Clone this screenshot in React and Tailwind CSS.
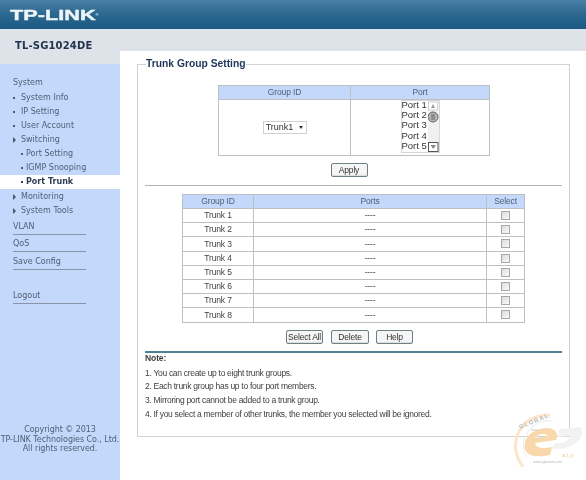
const sans = "font-['Liberation_Sans',Arial,sans-serif]";
const deja = "font-['DejaVu_Sans',Verdana,sans-serif]";

function Bullet({ type }) {
  return (
    <span className="w-[21px] pl-[13px] flex items-center shrink-0">
      {type === "arrow" ? (
        <span className="w-0 h-0 border-y-[3px] border-y-transparent border-l-[3px] border-l-[#4a5a6c]" />
      ) : (
        <span className="w-[2px] h-[2px] bg-[#4a5a6c]" />
      )}
    </span>
  );
}

function TopItem({ label, type = "dot" }) {
  return (
    <div className="h-[14px] flex items-center text-[8px] text-[#4f5f76]">
      <Bullet type={type} />
      <span>{label}</span>
    </div>
  );
}

function SubItem({ label, active }) {
  return (
    <div
      className={
        "h-[14px] flex items-center pl-[21px] text-[8px] " +
        (active ? "bg-white font-bold text-[#2f3f55]" : "text-[#4f5f76]")
      }
    >
      <span className="w-[5px] flex items-center">
        <span className={"w-[2px] h-[2px] " + (active ? "bg-[#2f3f55]" : "bg-[#4f5f76]")} />
      </span>
      <span>{label}</span>
    </div>
  );
}

function LineItem({ label, className = "" }) {
  return (
    <div className={"ml-[13px] w-[73px] h-[15px] border-b border-[#8a94a8] text-[8px] leading-[14px] text-[#4f5f76] " + className}>
      {label}
    </div>
  );
}

function Sidebar() {
  return (
    <aside className={"w-[120px] shrink-0 flex flex-col bg-[#c3d8fb] " + deja}>
      <div className="h-[35px] bg-[#dee3ea] flex items-center pl-[15px] pb-[2px] text-[10px] font-bold tracking-[0.15px] text-[#22344e]">
        TL-SG1024DE
      </div>
      <div className="pt-[11px] flex-1 flex flex-col">
        <div className="h-[15px] pl-[13px] flex items-center text-[8px] text-[#4f5f76]">System</div>
        <div className="h-[1px]" />
        <TopItem label="System Info" />
        <TopItem label="IP Setting" />
        <TopItem label="User Account" />
        <TopItem label="Switching" type="arrow" />
        <SubItem label="Port Setting" />
        <SubItem label="IGMP Snooping" />
        <SubItem label="Port Trunk" active />
        <div className="h-[1px]" />
        <TopItem label="Monitoring" type="arrow" />
        <TopItem label="System Tools" type="arrow" />
        <LineItem label="VLAN" className="mt-[2px]" />
        <LineItem label="QoS" className="mt-[2px]" />
        <LineItem label="Save Config" className="mt-[3px]" />
        <LineItem label="Logout" className="mt-[19px]" />
        <div className="mt-auto mb-[26px] text-center text-[8px] leading-[9.7px] tracking-[-0.05px] text-[#4f5f76]">
          <div>Copyright © 2013</div>
          <div className="whitespace-nowrap">TP-LINK Technologies Co., Ltd.</div>
          <div>All rights reserved.</div>
        </div>
      </div>
    </aside>
  );
}

function Btn({ children, className = "" }) {
  return (
    <button className={"h-[14px] rounded-[2px] border border-[#6f7f86] bg-[#f6f6f6] text-[8.5px] tracking-[-0.2px] leading-[12px] text-[#333] shadow-[inset_0_-1px_1px_#ddd] whitespace-nowrap " + className}>
      {children}
    </button>
  );
}

function PortList() {
  return (
    <div className="flex w-[39px] h-[53px] border border-[#d8d8d8] bg-white overflow-hidden">
      <div className="flex-1 -mt-[1px] text-left whitespace-nowrap text-[9.5px] leading-[10.2px] text-[#333]">
        {["Port 1", "Port 2", "Port 3", "Port 4", "Port 5"].map((p) => (
          <div key={p}>{p}</div>
        ))}
      </div>
      <svg width="11" height="51" viewBox="0 0 11 51" className="shrink-0">
        <rect x="0" y="0" width="11" height="51" fill="#f0f0f0" />
        <rect x="0.5" y="1" width="9" height="8" fill="#fff" stroke="#c4c4c4" strokeWidth="0.7" />
        <path d="M5 3 L7 7 L3 7 Z" fill="#9a9a9a" />
        <circle cx="5" cy="16" r="5" fill="#b5b5b5" stroke="#666" strokeWidth="1" />
        <path d="M3 14 H7 M3 16 H7 M3 18 H7" stroke="#444" strokeWidth="0.7" />
        <rect x="0.5" y="41.5" width="9.5" height="9" fill="#fff" stroke="#555" strokeWidth="1" />
        <path d="M2.5 44 L8 44 L5.2 48 Z" fill="#888" />
      </svg>
    </div>
  );
}

function Checkbox() {
  return <span className="block mx-auto w-[9px] h-[9px] border border-[#a8a8a8] bg-gradient-to-br from-[#dcdcdc] to-[#fafafa]" />;
}

function Watermark() {
  return (
    <svg className="absolute left-[504px] top-[405px]" width="82" height="70" viewBox="0 0 82 70">
      <path d="M46 10 C20 8 0 36 19 62" fill="none" stroke="#fbe6ca" strokeWidth="3" />
      <path d="M49 16 C29 13 12 34 23 52" fill="none" stroke="#ececec" strokeWidth="1" />
      <path d="M21 44 C19 32 29 24 42 23 C52 23 55 29 52 35 L31 38 C32 43 39 44 48 42 L46 50 C33 53 23 51 21 44 Z M31 33 L44 31 C43 28 34 28 31 33 Z" fill="#f9d9ac" />
      <path d="M55 24 L77 22 C81 32 73 42 56 44 C52 44 50 44 48 43 L51 38 C60 39 65 36 66 31 L54 32 Z" fill="#f2f2f2" />
      <text x="16" y="24" fontSize="6" fontWeight="700" fill="#b5b5b5" fontFamily="Liberation Sans" transform="rotate(-22 16 24)" letterSpacing="1.1">GLOBAL</text>
      <text x="27" y="26" fontSize="3.5" fill="#bdbdbd" fontFamily="Liberation Sans">ваш</text>
      <text x="58" y="52" fontSize="6" fill="#e8cfa0" fontFamily="Liberation Sans">a.t.y</text>
      <text x="29" y="58" fontSize="4" fill="#b8b8b8" fontFamily="Liberation Sans">www.geznd.com</text>
    </svg>
  );
}

const th = "h-[14px] border border-[#bcc0c4] bg-[#c3d8fb] font-normal text-[#4e6078] p-0";
const td = "border border-[#bcc0c4] p-0 text-center";

export default function App() {
  return (
    <div className={"relative w-[586px] h-[480px] overflow-hidden flex flex-col bg-white blur-[0.35px] " + sans}>
      <header className="h-[29px] shrink-0 flex items-center pl-[10px] pt-[1px] bg-gradient-to-b from-[#4a7fa6] via-[#2b678f] to-[#1c5a83]">
        <span className="text-[15.5px] font-bold text-[#eef6f8] leading-none origin-left scale-x-[1.4] [-webkit-text-stroke:0.4px_#eef6f8]">
          TP-LINK<span className="relative top-[-4px] text-[3px] [-webkit-text-stroke:0px]">®</span>
        </span>
      </header>
      <div className="flex-1 flex min-h-0">
        <Sidebar />
        <main className="flex-1 flex flex-col min-w-0">
          <div className="h-[22px] shrink-0 bg-[#dee3ea]" />
          <div className="flex-1 pl-[17px] pr-[16px]">
            <fieldset className="mt-[6px] h-[380px] border border-[#d2d2d2] px-[7px] pb-0 m-0">
              <legend className="ml-[1px] px-0 text-[10.3px] leading-[14px] font-bold text-[#23395b]">Trunk Group Setting</legend>
              <table className="mt-[14px] ml-[73px] w-[272px] border-collapse table-fixed text-[8.5px] tracking-[-0.15px] text-center">
                <thead>
                  <tr>
                    <th className={th + " w-[132px]"}>Group ID</th>
                    <th className={th}>Port</th>
                  </tr>
                </thead>
                <tbody>
                  <tr className="h-[56px]">
                    <td className={td}>
                      <span className="inline-flex w-[44px] h-[13px] items-center justify-center gap-[6px] border border-[#d0d0d0] bg-white text-[9px] tracking-normal text-[#333]">
                        Trunk1
                        <span className="w-0 h-0 border-x-[2.5px] border-x-transparent border-t-[3px] border-t-[#333]" />
                      </span>
                    </td>
                    <td className={td + " align-top"}>
                      <div className="flex justify-center tracking-normal"><PortList /></div>
                    </td>
                  </tr>
                </tbody>
              </table>
              <div className="mt-[7px] flex justify-center ml-[-9px]">
                <Btn className="w-[37px]">Apply</Btn>
              </div>
              <div className="mt-[8px] h-[1px] bg-[#b4b4b4]" />
              <table className="mt-[8px] ml-[37px] w-[343px] border-collapse table-fixed text-[8.5px] tracking-[-0.15px] text-center">
                <thead>
                  <tr>
                    <th className={th + " w-[71px]"}>Group ID</th>
                    <th className={th}>Ports</th>
                    <th className={th + " w-[38px]"}>Select</th>
                  </tr>
                </thead>
                <tbody>
                  {[1, 2, 3, 4, 5, 6, 7, 8].map((n) => (
                    <tr key={n} className="h-[14.2px] text-[#444]">
                      <td className={td}>Trunk {n}</td>
                      <td className={td}>----</td>
                      <td className={td}><Checkbox /></td>
                    </tr>
                  ))}
                </tbody>
              </table>
              <div className="mt-[7px] ml-[141px] flex">
                <Btn className="w-[37px] mr-[8px]">Select All</Btn>
                <Btn className="w-[38px] mr-[7px]">Delete</Btn>
                <Btn className="w-[37px]">Help</Btn>
              </div>
              <div className="mt-[7px] h-[2px] bg-[#4e8391]" />
              <div className="text-[8.5px] tracking-[-0.3px] text-[#3e3e3e]">
                <div className="h-[12px] leading-[11px] font-bold tracking-[-0.1px]">Note:</div>
                <div className="h-[13.7px] leading-[14px] mt-[1px]">1. You can create up to eight trunk groups.</div>
                <div className="h-[13.7px] leading-[14px]">2. Each trunk group has up to four port members.</div>
                <div className="h-[13.7px] leading-[14px]">3. Mirroring port cannot be added to a trunk group.</div>
                <div className="h-[13.7px] leading-[14px]">4. If you select a member of other trunks, the member you selected will be ignored.</div>
              </div>
            </fieldset>
          </div>
        </main>
      </div>
      <Watermark />
    </div>
  );
}
